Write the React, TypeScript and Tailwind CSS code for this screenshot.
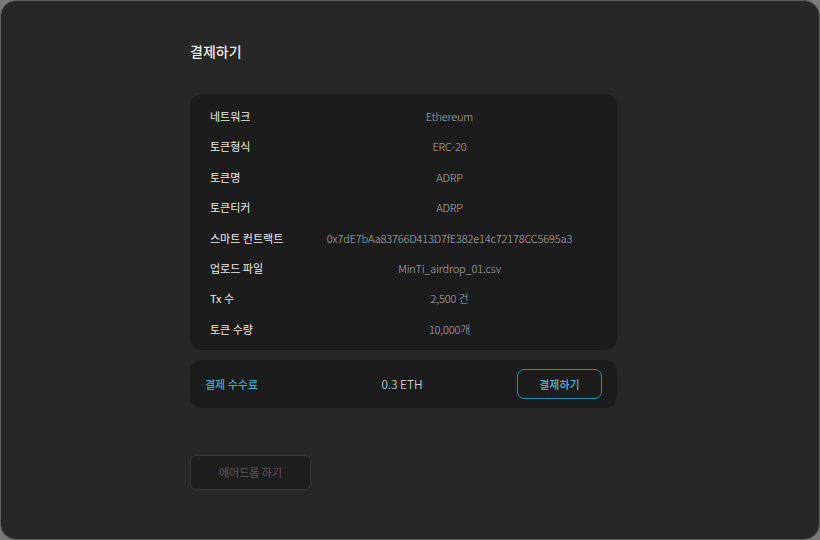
import React from 'react';

const rows: { label: string; value: string }[] = [
    { label: '네트워크', value: 'Ethereum' },
    { label: '토큰형식', value: 'ERC-20' },
    { label: '토큰명', value: 'ADRP' },
    { label: '토큰티커', value: 'ADRP' },
    { label: '스마트 컨트랙트', value: '0x7dE7bAa83766D413D7fE382e14c72178CC5695a3' },
    { label: '업로드 파일', value: 'MinTi_airdrop_01.csv' },
    { label: 'Tx 수', value: '2,500 건' },
    { label: '토큰 수량', value: '10,000개' },
];

export default function App() {
    return (
        <div
            className="w-[820px] h-[540px] bg-[#7a7a7a]"
            style={{ fontFamily: '"Noto Sans CJK KR", "Noto Sans", sans-serif' }}
        >
            <div className="w-full h-full rounded-[16px] border border-[#5e5e5e] bg-[#282728] pt-[38px] pl-[189px]">
                <h1 className="text-[14px] font-medium text-[#ececec] leading-[24px]">결제하기</h1>

                <div className="mt-[31px] w-[427px] rounded-[12px] bg-[#1c1c1d] px-[20px] pt-[7px] pb-[6px]">
                    {rows.map(row => (
                        <div key={row.label} className="flex items-center h-[30.4px]">
                            <div className="w-[92px] text-[11px] font-normal text-[#ececec]">{row.label}</div>
                            <div className="flex-1 text-center text-[11px] font-light text-[#b0b0b0] tracking-[-0.15px]">
                                {row.value}
                            </div>
                        </div>
                    ))}
                </div>

                <div className="mt-[10px] w-[427px] h-[48px] rounded-[12px] bg-[#1c1c1d] flex items-center pl-[15px] pr-[15px]">
                    <div className="w-[120px] text-[11px] font-medium text-[#3fa9c9]">결제 수수료</div>
                    <div className="flex-1 text-center text-[12px] font-light text-[#ededed] pr-[38px]">0.3 ETH</div>
                    <button className="w-[85px] h-[30px] rounded-[7px] border border-[#2c8ca3] text-[11px] font-medium text-[#4fb6d3]">
                        결제하기
                    </button>
                </div>

                <button className="mt-[47px] w-[121px] h-[35px] rounded-[6px] border border-[#363536] bg-[#1f1e1f] text-[11px] text-[#5a595a]">
                    에어드롭 하기
                </button>
            </div>
        </div>
    );
}
